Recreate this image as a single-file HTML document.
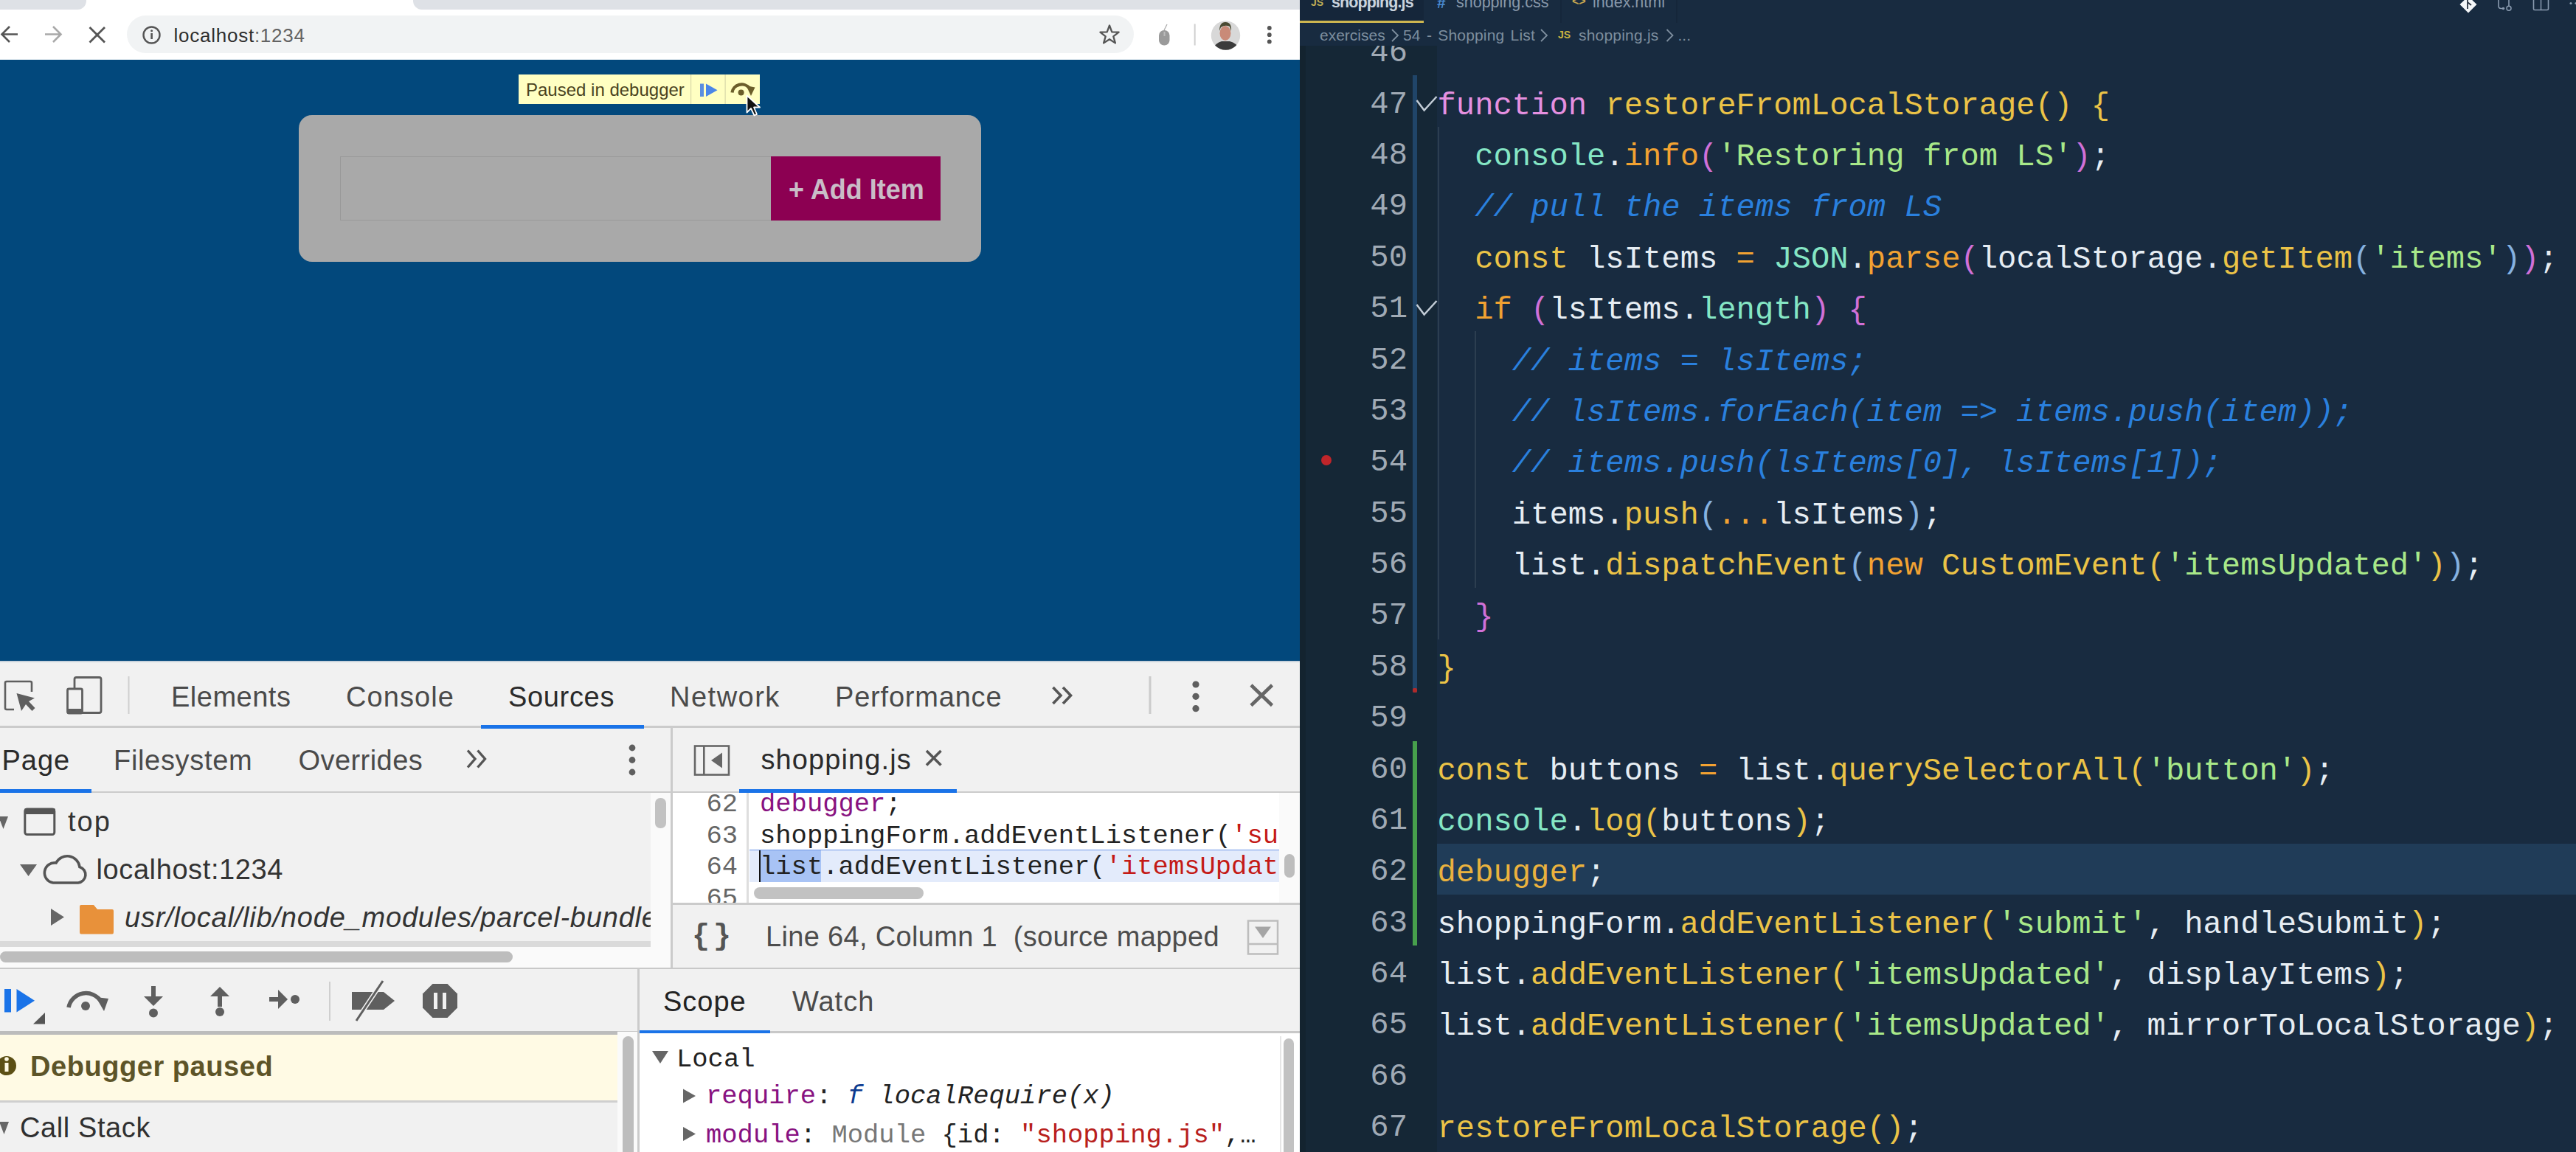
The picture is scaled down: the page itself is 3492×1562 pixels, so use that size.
<!DOCTYPE html>
<html><head><meta charset="utf-8">
<style>
*{margin:0;padding:0;box-sizing:border-box}
html,body{width:3492px;height:1562px;overflow:hidden;background:#182b40;font-family:"Liberation Sans",sans-serif}
.a{position:absolute}
.t{position:absolute;white-space:pre;line-height:1}
svg{position:absolute;overflow:visible}
/* vscode */
.vl{position:absolute;left:1948.5px;white-space:pre;font-family:"Liberation Mono",monospace;font-size:42.2px;line-height:69.32px;height:69.32px;color:#e6edf3}
.ln{position:absolute;left:1762px;width:146px;text-align:right;white-space:pre;font-family:"Liberation Mono",monospace;font-size:42.2px;line-height:69.32px;height:69.32px;color:#a0aab5}
.k{color:#e590e0}.f{color:#ebc347}.o{color:#f2a232}.m{color:#85e6c5}.s{color:#a8e889}.c{color:#2a80de;font-style:italic}
.d{color:#eab23e}.pp{color:#d070d8}.pb{color:#86b2e0}.pg{color:#ebc347}.w{color:#e6edf3}
/* devtools */
.dt{position:absolute;white-space:pre;line-height:1;color:#4a4a4a;font-size:38px}
.dm{position:absolute;white-space:pre;font-family:"Liberation Mono",monospace;font-size:35.5px;line-height:42.4px;color:#222}
</style></head>
<body>
<!-- ============ BROWSER ============ -->
<div class="a" style="left:0;top:0;width:1762px;height:81px;background:#fff"></div>
<div class="a" style="left:0;top:0;width:117px;height:13px;background:#dee1e6;border-bottom-right-radius:12px"></div>
<div class="a" style="left:560px;top:0;width:1202px;height:13px;background:#dee1e6;border-bottom-left-radius:12px"></div>
<div class="a" style="left:172px;top:21px;width:1365px;height:51px;background:#f1f3f4;border-radius:25.5px"></div>
<div class="t" style="left:235.5px;top:34.5px;font-size:26px;letter-spacing:0.75px;color:#2e2e2e">localhost<span style="color:#636363">:1234</span></div>
<svg style="left:0;top:0" width="1762" height="81">
<path d="M24 46.5 H3 M13 36 L2.5 46.5 L13 57" stroke="#555" stroke-width="2.6" fill="none"/>
<path d="M61 46.5 H82 M72 36 L82.5 46.5 L72 57" stroke="#a9a9a9" stroke-width="2.6" fill="none"/>
<path d="M121.5 37 L142 57.5 M142 37 L121.5 57.5" stroke="#555" stroke-width="2.8" fill="none"/>
<circle cx="205.5" cy="47.5" r="11" stroke="#555" stroke-width="2.4" fill="none"/>
<rect x="204.3" y="45" width="2.6" height="8" fill="#555"/><circle cx="205.6" cy="41.8" r="1.5" fill="#555"/>
<path d="M1504 34.5 L1507.3 43.3 L1516.6 43.6 L1509.3 49.4 L1511.9 58.4 L1504 53.2 L1496.1 58.4 L1498.7 49.4 L1491.4 43.6 L1500.7 43.3 Z" stroke="#555" stroke-width="2.3" fill="none" stroke-linejoin="round"/>
<path d="M1578 41 L1582 33" stroke="#aaa" stroke-width="1.2"/>
<rect x="1571" y="41" width="14.5" height="20.5" rx="7" fill="#9a9a9a"/>
<rect x="1577.5" y="43" width="2" height="6" fill="#bbb"/>
<rect x="1618.7" y="32.5" width="2" height="29" fill="#d0d0d0"/>
<clipPath id="av"><circle cx="1661.5" cy="48" r="19.7"/></clipPath>
<g clip-path="url(#av)">
<rect x="1640" y="26" width="44" height="44" fill="#d8d8d8"/>
<path d="M1642 68 Q1648 58 1656 56 L1667 56 Q1676 58 1682 68 Z" fill="#3b3b3b"/>
<ellipse cx="1661" cy="45" rx="7.5" ry="10" fill="#c98a78"/>
<path d="M1653 42 Q1653 30 1661 30 Q1670 30 1669 42 L1667 36 Q1661 33 1655 37 Z" fill="#4a4a32"/>
</g>
<circle cx="1720.8" cy="38" r="2.9" fill="#555"/><circle cx="1720.8" cy="47.2" r="2.9" fill="#555"/><circle cx="1720.8" cy="56.4" r="2.9" fill="#555"/>
</svg>

<!-- page -->
<div class="a" style="left:0;top:81px;width:1762px;height:815px;background:#02487c"></div>
<div class="a" style="left:405px;top:156px;width:925px;height:199px;background:#a9a9a9;border-radius:18px"></div>
<div class="a" style="left:461px;top:212px;width:584px;height:87px;border:1.5px solid #999;border-right:none"></div>
<div class="a" style="left:1045px;top:212px;width:230px;height:87px;background:#8c0052"></div>
<div class="t" style="left:1069px;top:237.6px;font-size:36px;font-weight:bold;color:#c9bdc7;transform:scaleY(1.08);transform-origin:0 0">+ Add Item</div>
<div class="a" style="left:703px;top:101px;width:327px;height:40px;background:#ffffc2"></div>
<div class="t" style="left:713px;top:110px;font-size:24px;color:#4a4320">Paused in debugger</div>
<svg style="left:0;top:0" width="1762" height="300">
<rect x="936" y="101" width="1.2" height="40" fill="#d8d8a8"/>
<rect x="982.5" y="101" width="1.2" height="40" fill="#d8d8a8"/>
<rect x="949" y="113.5" width="5" height="17.5" fill="#5a8ee0"/>
<path d="M957 113.5 L972.5 122.2 L957 131 Z" fill="#4a86e8"/>
<path d="M992.5 125.5 A13 12 0 0 1 1016 119.5" stroke="#6b5e2a" stroke-width="4.3" fill="none"/>
<path d="M1011.5 116 L1023.5 118.5 L1018 130 Z" fill="#6b5e2a"/>
<circle cx="1004.6" cy="125.5" r="4" fill="#6b5e2a"/>
<path d="M1012.5 129.5 L1012.5 152.5 L1018 147 L1022.5 156.5 L1026 155 L1022 145.5 L1030 145.5 Z" fill="#111" stroke="#fff" stroke-width="1.8" stroke-linejoin="round"/>
</svg>

<!-- devtools -->
<div class="a" style="left:0;top:896px;width:1762px;height:666px;background:#f1f1f1"></div>
<div class="a" style="left:0;top:896px;width:1762px;height:2px;background:#c9d3dc"></div>
<div class="a" style="left:0;top:983.5px;width:1762px;height:3px;background:#cbcbcb"></div>
<div class="a" style="left:652px;top:983px;width:221px;height:5px;background:#1a73e8"></div>
<div class="dt" style="left:232px;top:925.5px;letter-spacing:0.5px">Elements</div>
<div class="dt" style="left:469px;top:925.5px;letter-spacing:1.08px">Console</div>
<div class="dt" style="left:689px;top:925.5px;letter-spacing:0.67px;color:#2b2b2b">Sources</div>
<div class="dt" style="left:908px;top:925.5px;letter-spacing:1.5px">Network</div>
<div class="dt" style="left:1132px;top:925.5px;letter-spacing:0.8px">Performance</div>
<svg style="left:0;top:0" width="1762" height="1562">
<!-- inspect -->
<path d="M43 938 V926 Q43 924 41 924 H9 Q7 924 7 926 V960 Q7 962 9 962 H19" stroke="#5f5f5f" stroke-width="2.6" fill="none"/>
<path d="M22.5 940 L47 946.5 L39 951 L47.5 960 L43.5 964 L35 955 L29 964 Z" fill="#5f5f5f"/>
<!-- device -->
<rect x="101" y="918.5" width="36" height="48" rx="2.5" stroke="#5f5f5f" stroke-width="2.8" fill="none"/>
<rect x="91.5" y="934" width="20" height="33" rx="2" stroke="#5f5f5f" stroke-width="2.8" fill="#f1f1f1"/>
<rect x="91" y="961" width="21" height="6.5" fill="#5f5f5f"/>
<rect x="173.5" y="917" width="2" height="51" fill="#cfcfcf"/>
<!-- >> -->
<path d="M1427.5 932 L1438 943 L1427.5 954 M1441 932 L1451.5 943 L1441 954" stroke="#555" stroke-width="3.6" fill="none"/>
<rect x="1557.5" y="917" width="3" height="51" fill="#cbcbcb"/>
<circle cx="1621" cy="928" r="4.6" fill="#5f5f5f"/><circle cx="1621" cy="944.3" r="4.6" fill="#5f5f5f"/><circle cx="1621" cy="960.7" r="4.6" fill="#5f5f5f"/>
<path d="M1696 929 L1724.5 956.5 M1724.5 929 L1696 956.5" stroke="#666" stroke-width="4.6" fill="none"/>
</svg>

<!-- sub row -->
<div class="a" style="left:908.5px;top:987px;width:3.5px;height:325px;background:#cbcbcb"></div>
<div class="a" style="left:0;top:1072.5px;width:1762px;height:2.5px;background:#cbcbcb"></div>
<div class="a" style="left:0;top:1070px;width:124px;height:5px;background:#1a73e8"></div>
<div class="dt" style="left:2.5px;top:1012px;letter-spacing:1px;color:#2b2b2b">Page</div>
<div class="dt" style="left:154px;top:1012px;letter-spacing:0.67px">Filesystem</div>
<div class="dt" style="left:404.5px;top:1012px;letter-spacing:0.44px">Overrides</div>
<div class="dt" style="left:1031.5px;top:1011px;letter-spacing:1.1px;color:#2b2b2b">shopping.js</div>
<div class="a" style="left:1002px;top:1070px;width:295px;height:5px;background:#1a73e8"></div>
<svg style="left:0;top:0" width="1762" height="1562">
<path d="M634 1017.5 L644 1029 L634 1040.5 M647.5 1017.5 L657.5 1029 L647.5 1040.5" stroke="#555" stroke-width="3.4" fill="none"/>
<circle cx="857" cy="1014" r="4.4" fill="#5f5f5f"/><circle cx="857" cy="1030.5" r="4.4" fill="#5f5f5f"/><circle cx="857" cy="1047" r="4.4" fill="#5f5f5f"/>
<rect x="942" y="1011.5" width="46" height="39" stroke="#666" stroke-width="2.6" fill="none"/>
<rect x="953" y="1011.5" width="2.6" height="39" fill="#666"/>
<path d="M964 1031 L979 1020.5 V1041.5 Z" fill="#666"/>
<path d="M1256 1018 L1275.5 1037.5 M1275.5 1018 L1256 1037.5" stroke="#555" stroke-width="3.6" fill="none"/>
</svg>

<!-- navigator -->
<svg style="left:0;top:0" width="1762" height="1562">
<path d="M-2 1107 H11 L4.5 1124 Z" fill="#666"/>
<rect x="33.8" y="1097" width="40" height="34.5" rx="3" stroke="#555" stroke-width="3" fill="none"/>
<rect x="33" y="1096" width="42" height="8" rx="2" fill="#555"/>
<path d="M27 1172 H50 L38.5 1188 Z" fill="#666"/>
<path d="M72 1197 H106 A11 11 0 0 0 108 1175.5 A17 17 0 0 0 76 1170 A13 13 0 0 0 72 1197 Z" stroke="#555" stroke-width="3.6" fill="none"/>
<path d="M69 1232 L87 1243.5 L69 1255 Z" fill="#666"/>
<path d="M108 1229 Q108 1227 110 1227 H127 L132 1233 H152 Q154 1233 154 1235 V1264 Q154 1266.5 152 1266.5 H110 Q108 1266.5 108 1264 Z" fill="#e8913a"/>
</svg>
<div class="dt" style="left:92px;top:1095px;letter-spacing:2px;color:#333">top</div>
<div class="dt" style="left:130.5px;top:1160px;letter-spacing:0.6px;color:#333">localhost:1234</div>
<div class="dt" style="left:169px;top:1224.5px;color:#333;font-style:italic;letter-spacing:0.8px;width:713px;overflow:hidden">usr/local/lib/node_modules/parcel-bundler/</div>
<div class="a" style="left:882px;top:1075px;width:27px;height:237px;background:#fafafa"></div>
<div class="a" style="left:888px;top:1081.5px;width:14.5px;height:41.5px;border-radius:7px;background:#c2c2c2"></div>
<div class="a" style="left:0;top:1275.5px;width:882px;height:8px;background:#dadada"></div>
<div class="a" style="left:0;top:1283.5px;width:882px;height:28px;background:#fafafa"></div>
<div class="a" style="left:0;top:1290px;width:695px;height:15px;border-radius:7.5px;background:#bdbdbd"></div>

<!-- code pane -->
<div class="a" style="left:911.5px;top:1075px;width:850.5px;height:149px;background:#fff;overflow:hidden">
<div class="a" style="left:100.5px;top:0;width:3px;height:149px;background:#dedede"></div>
<div class="a" style="left:104px;top:77px;width:718.5px;height:43.7px;background:#e3ebfb;border-top:1.2px solid #6d95e6"></div>
<div class="a" style="left:118.5px;top:78.2px;width:83px;height:42.5px;background:#a8c3f5"></div>
<div class="a" style="left:117.5px;top:78px;width:1.8px;height:42.7px;background:#111"></div>
<div class="dm" style="left:0;top:-4.7px;width:88.5px;text-align:right;color:#666">62
63
64
65</div>
<div class="dm" style="left:118.5px;top:-4.7px"><span style="color:#881280">debugger</span>;
shoppingForm.addEventListener(<span style="color:#c41a16">'submit'</span>, handleSubmit);
list.addEventListener(<span style="color:#c41a16">'itemsUpdated'</span>, displayItems);
list.addEventListener(<span style="color:#c41a16">'itemsUpdated'</span>, mirrorToLocalStorage);</div>
<div class="a" style="left:822.5px;top:0;width:28px;height:149px;background:#fafafa"></div>
<div class="a" style="left:104px;top:123px;width:718.5px;height:26px;background:#fff"></div>
<div class="a" style="left:110px;top:127.6px;width:230.5px;height:16px;border-radius:8px;background:#c2c2c2"></div>
<div class="a" style="left:829.5px;top:83px;width:14px;height:32px;border-radius:7px;background:#bdbdbd"></div>
</div>
<!--DEVCODE-->
<!-- status -->
<div class="a" style="left:911.5px;top:1223.5px;width:850.5px;height:3px;background:#cbcbcb"></div>
<div class="a" style="left:0;top:1311.5px;width:1762px;height:2px;background:#c8c8c8"></div>
<div class="dt" style="left:938px;top:1251px;color:#555;font-family:'Liberation Mono',monospace;font-size:40px;font-weight:bold;letter-spacing:5px">{}</div>
<div class="dt" style="left:1038px;top:1251px;letter-spacing:0.33px;color:#4d4d4d">Line 64, Column 1  (source mapped</div>
<svg style="left:0;top:0" width="1762" height="1562">
<rect x="1692" y="1248.5" width="40" height="45" stroke="#bdbdbd" stroke-width="2.5" fill="none"/>
<path d="M1692 1280 H1732" stroke="#bdbdbd" stroke-width="2.5"/>
<path d="M1701 1256.5 H1723 L1712 1272 Z" fill="#a5a5a5"/>
</svg>

<!-- debugger toolbar -->
<div class="a" style="left:864px;top:1313px;width:2.5px;height:249px;background:#cbcbcb"></div>
<div class="a" style="left:0;top:1398px;width:1762px;height:3px;background:#c8c8c8"></div>
<svg style="left:0;top:0" width="1762" height="1562">
<rect x="6" y="1341" width="9" height="31.5" fill="#1a73e8"/>
<path d="M22.5 1341 L47 1356.8 L22.5 1372.5 Z" fill="#1a73e8"/>
<path d="M45 1388.5 L61 1373 V1388.5 Z" fill="#555"/>
<path d="M93 1366 A24 24 0 0 1 137 1358" stroke="#5f5f5f" stroke-width="5.5" fill="none"/>
<path d="M130 1352 L147 1354 L141 1371 Z" fill="#5f5f5f"/>
<circle cx="116" cy="1364" r="6" fill="#5f5f5f"/>
<path d="M208 1337 V1358" stroke="#5f5f5f" stroke-width="6" fill="none"/><path d="M195 1351 H221 L208 1364 Z" fill="#5f5f5f"/>
<circle cx="208" cy="1373.5" r="6" fill="#5f5f5f"/>
<path d="M298 1348 V1365" stroke="#5f5f5f" stroke-width="6" fill="none"/><path d="M285 1351 H311 L298 1338 Z" fill="#5f5f5f"/>
<circle cx="298" cy="1372" r="6" fill="#5f5f5f"/>
<path d="M365 1355 H382" stroke="#5f5f5f" stroke-width="6" fill="none"/><path d="M377 1342 L390 1355 L377 1368 Z" fill="#5f5f5f"/>
<circle cx="400" cy="1355" r="6" fill="#5f5f5f"/>
<rect x="446" y="1331" width="2" height="53" fill="#cfcfcf"/>
<path d="M477 1345 H520 L535 1357 L520 1369 H477 Z" fill="#5f5f5f"/>
<path d="M519 1330 L483 1384" stroke="#f1f1f1" stroke-width="6" fill="none"/>
<path d="M519 1330 L483 1384" stroke="#5f5f5f" stroke-width="3" fill="none"/>
<path d="M586.5 1334 H606.5 L620 1347.5 V1366.5 L606.5 1380 H586.5 L573 1366.5 V1347.5 Z" fill="#5f5f5f"/>
<rect x="588" y="1346" width="5" height="22" fill="#f1f1f1"/><rect x="600" y="1346" width="5" height="22" fill="#f1f1f1"/>
</svg>

<!-- paused banner -->
<div class="a" style="left:0;top:1401px;width:836.5px;height:92px;background:#fffae4"></div>
<div class="a" style="left:0;top:1492px;width:836.5px;height:3px;background:#cfcfcf"></div>
<div class="a" style="left:0;top:1398px;width:836.5px;height:4.5px;background:#bcbcbc"></div>
<div class="a" style="left:836.5px;top:1399px;width:27.5px;height:163px;background:#fafafa"></div>
<svg style="left:0;top:0" width="1762" height="1562">
<circle cx="9" cy="1445" r="13" fill="#5c4f14"/>
<rect x="6.5" y="1441" width="5" height="12" fill="#fffae4"/><circle cx="9" cy="1436" r="2.8" fill="#fffae4"/>
</svg>
<div class="dt" style="left:41px;top:1426.5px;letter-spacing:0.55px;font-weight:bold;color:#5d5428">Debugger paused</div>
<svg style="left:0;top:0" width="1762" height="1562"><path d="M-1 1521 H12 L5.5 1538 Z" fill="#666"/></svg>
<div class="dt" style="left:27px;top:1509.7px;letter-spacing:0.6px;color:#303030">Call Stack</div>
<div class="a" style="left:843.6px;top:1405px;width:15px;height:165px;border-radius:7.5px;background:#bdbdbd"></div>

<!-- scope -->
<div class="dt" style="left:899px;top:1339px;letter-spacing:1px;color:#222">Scope</div>
<div class="dt" style="left:1074px;top:1339px;letter-spacing:1px;color:#4a4a4a">Watch</div>
<div class="a" style="left:867px;top:1397px;width:177px;height:5px;background:#1a73e8"></div>
<div class="a" style="left:866.5px;top:1401px;width:895.5px;height:161px;background:#fff"></div>
<svg style="left:0;top:0" width="1762" height="1562">
<path d="M884 1425 H906 L895 1442 Z" fill="#666"/>
<path d="M926 1476.5 L943 1486 L926 1495.5 Z" fill="#666"/>
<path d="M926 1528 L943 1537.5 L926 1547 Z" fill="#666"/>
</svg>
<div class="dm" style="left:917px;top:1415.5px;color:#222">Local</div>
<div class="dm" style="left:957px;top:1466px"><span style="color:#881280">require</span>: <span style="color:#0d3b90;font-style:italic">f</span> <span style="font-style:italic;color:#222">localRequire(x)</span></div>
<div class="dm" style="left:957px;top:1518.5px"><span style="color:#881280">module</span>: <span style="color:#777">Module</span> {id: <span style="color:#b8201c">"shopping.js"</span>,…</div>
<div class="a" style="left:1735px;top:1405px;width:2px;height:157px;background:#e6e6e6"></div>
<div class="a" style="left:1740px;top:1408px;width:14px;height:160px;border-radius:7px;background:#c2c2c2"></div>

<!-- ============ VSCODE ============ -->
<!-- vscode chrome -->
<div class="a" style="left:1762px;top:62px;width:186px;height:1500px;background:#152736"></div>
<div class="a" style="left:1762px;top:62px;width:8px;height:1500px;background:#13232f"></div>
<div class="a" style="left:1762px;top:0;width:168px;height:31px;background:#15263a"></div>
<div class="a" style="left:1762px;top:27.5px;width:168px;height:3.5px;background:#cdb650"></div>
<div class="a" style="left:2115px;top:0;width:2px;height:31px;background:#15263a"></div>
<div class="a" style="left:2272px;top:0;width:2px;height:31px;background:#15263a"></div>
<div class="t" style="left:1777px;top:-4px;font-size:14px;font-weight:bold;color:#bfae55">JS</div>
<div class="t" style="left:1805px;top:-7px;font-size:21.5px;font-weight:bold;letter-spacing:-0.9px;color:#c9d3dd">shopping.js</div>
<div class="t" style="left:1948px;top:-7px;font-size:21px;font-weight:bold;color:#4a8ad0">#</div>
<div class="t" style="left:1974px;top:-7px;font-size:21.5px;color:#8797a8">shopping.css</div>
<div class="t" style="left:2131px;top:-6px;font-size:16px;font-weight:bold;color:#c8a850">&lt;&gt;</div>
<div class="t" style="left:2159px;top:-7px;font-size:21.5px;color:#8797a8">index.html</div>
<div class="t" style="left:1789px;top:37px;font-size:21px;color:#7d8e9e">exercises</div>
<div class="t" style="left:1902px;top:37px;font-size:21px;word-spacing:2.3px;letter-spacing:0.15px;color:#7d8e9e">54 - Shopping List</div>
<div class="t" style="left:2112px;top:40px;font-size:14px;font-weight:bold;color:#c8b440">JS</div>
<div class="t" style="left:2140px;top:36.5px;font-size:21px;letter-spacing:0.2px;color:#7d8e9e">shopping.js</div>
<div class="t" style="left:2274.5px;top:36.5px;font-size:21px;color:#7d8e9e">...</div>
<svg style="left:0;top:0" width="3492" height="100">
<path d="M1887 40 L1895 48 L1887 56 M2089 40 L2097 48 L2089 56 M2259.5 40 L2267.5 48 L2259.5 56" stroke="#7d8e9e" stroke-width="1.8" fill="none"/>
</svg>
<svg style="left:0;top:0" width="3492" height="40">
<path d="M3346 -5 L3357.5 6 L3346 17.5 L3334.5 6 Z" fill="#f4f6f8"/>
<path d="M3345 -2 V12 M3345 3 L3350 7" stroke="#2a3440" stroke-width="1.8" fill="none"/>
<path d="M3387 -2 V8 Q3387 11.5 3390.5 11.5 H3393" stroke="#8a9bb0" stroke-width="1.6" fill="none"/>
<path d="M3401 -2 V8" stroke="#8a9bb0" stroke-width="1.6" fill="none"/>
<circle cx="3401" cy="11.3" r="3" stroke="#8a9bb0" stroke-width="1.5" fill="none"/>
<circle cx="3393.5" cy="11.5" r="1.8" fill="#8a9bb0"/>
<rect x="3434.5" y="-4" width="20" height="17.5" rx="1.5" stroke="#8a9bb0" stroke-width="1.6" fill="none"/>
<path d="M3444.5 -4 V13" stroke="#8a9bb0" stroke-width="1.5"/>
<circle cx="3485" cy="4.5" r="1.6" fill="#8a9bb0"/><circle cx="3492" cy="4.5" r="1.6" fill="#8a9bb0"/>
</svg>
<!-- gutter decorations -->
<div class="a" style="left:1915px;top:102px;width:5.5px;height:837px;background:#204569"></div>
<div class="a" style="left:1915px;top:933px;width:5.5px;height:6px;border-radius:2px;background:#b02a2a"></div>
<div class="a" style="left:1914.5px;top:1005px;width:6px;height:277px;background:#47a04c"></div>
<div class="a" style="left:1948px;top:1144px;width:1544px;height:69px;background:#203c58"></div>
<div class="a" style="left:1949px;top:172px;width:1.5px;height:695px;background:#2c3e50"></div>
<div class="a" style="left:1999px;top:449px;width:1.5px;height:348px;background:#2c3e50"></div>
<div class="a" style="left:1791px;top:617px;width:14px;height:14px;border-radius:50%;background:#c0252a"></div>
<svg style="left:0;top:0" width="3492" height="1562">
<path d="M1920.5 136 L1930.6 149.5 L1947.5 131" stroke="#c2ccd6" stroke-width="2.5" fill="none"/>
<path d="M1920.5 413 L1930.6 426.5 L1947.5 408" stroke="#c2ccd6" stroke-width="2.5" fill="none"/>
</svg>
<div class="a" style="left:0;top:0;width:3492px;height:1562px;clip-path:inset(62px 0 0 0)">
<!--CODE-->
<div class="ln" style="top:38.36px">46</div>
<div class="ln" style="top:107.74px">47</div>
<div class="vl" style="top:109.74px"><span class="k">function</span> <span class="f">restoreFromLocalStorage</span><span class="pg">()</span> <span class="pg">{</span></div>
<div class="ln" style="top:177.12px">48</div>
<div class="vl" style="top:179.12px">  <span class="m">console</span>.<span class="o">info</span><span class="pp">(</span><span class="s">'Restoring from LS'</span><span class="pp">)</span>;</div>
<div class="ln" style="top:246.49px">49</div>
<div class="vl" style="top:248.49px">  <span class="c">// pull the items from LS</span></div>
<div class="ln" style="top:315.87px">50</div>
<div class="vl" style="top:317.87px">  <span class="f">const</span> lsItems <span class="o">=</span> <span class="m">JSON</span>.<span class="o">parse</span><span class="pp">(</span>localStorage.<span class="f">getItem</span><span class="pb">(</span><span class="s">'items'</span><span class="pb">)</span><span class="pp">)</span>;</div>
<div class="ln" style="top:385.24px">51</div>
<div class="vl" style="top:387.24px">  <span class="o">if</span> <span class="pp">(</span>lsItems.<span class="m">length</span><span class="pp">)</span> <span class="pp">{</span></div>
<div class="ln" style="top:454.62px">52</div>
<div class="vl" style="top:456.62px">    <span class="c">// items = lsItems;</span></div>
<div class="ln" style="top:523.99px">53</div>
<div class="vl" style="top:525.99px">    <span class="c">// lsItems.forEach(item =&gt; items.push(item));</span></div>
<div class="ln" style="top:593.37px">54</div>
<div class="vl" style="top:595.37px">    <span class="c">// items.push(lsItems[0], lsItems[1]);</span></div>
<div class="ln" style="top:662.74px">55</div>
<div class="vl" style="top:664.74px">    items.<span class="f">push</span><span class="pb">(</span><span class="o">...</span>lsItems<span class="pb">)</span>;</div>
<div class="ln" style="top:732.12px">56</div>
<div class="vl" style="top:734.12px">    list.<span class="f">dispatchEvent</span><span class="pb">(</span><span class="o">new</span> <span class="f">CustomEvent</span><span class="pg">(</span><span class="s">'itemsUpdated'</span><span class="pg">)</span><span class="pb">)</span>;</div>
<div class="ln" style="top:801.49px">57</div>
<div class="vl" style="top:803.49px">  <span class="pp">}</span></div>
<div class="ln" style="top:870.87px">58</div>
<div class="vl" style="top:872.87px"><span class="pg">}</span></div>
<div class="ln" style="top:940.24px">59</div>
<div class="ln" style="top:1009.62px">60</div>
<div class="vl" style="top:1011.62px"><span class="f">const</span> buttons <span class="o">=</span> list.<span class="f">querySelectorAll</span><span class="pg">(</span><span class="s">'button'</span><span class="pg">)</span>;</div>
<div class="ln" style="top:1078.99px">61</div>
<div class="vl" style="top:1080.99px"><span class="m">console</span>.<span class="f">log</span><span class="pg">(</span>buttons<span class="pg">)</span>;</div>
<div class="ln" style="top:1148.37px">62</div>
<div class="vl" style="top:1150.37px"><span class="d">debugger</span>;</div>
<div class="ln" style="top:1217.74px">63</div>
<div class="vl" style="top:1219.74px">shoppingForm.<span class="f">addEventListener</span><span class="pg">(</span><span class="s">'submit'</span>, handleSubmit<span class="pg">)</span>;</div>
<div class="ln" style="top:1287.12px">64</div>
<div class="vl" style="top:1289.12px">list.<span class="f">addEventListener</span><span class="pg">(</span><span class="s">'itemsUpdated'</span>, displayItems<span class="pg">)</span>;</div>
<div class="ln" style="top:1356.49px">65</div>
<div class="vl" style="top:1358.49px">list.<span class="f">addEventListener</span><span class="pg">(</span><span class="s">'itemsUpdated'</span>, mirrorToLocalStorage<span class="pg">)</span>;</div>
<div class="ln" style="top:1425.87px">66</div>
<div class="ln" style="top:1495.24px">67</div>
<div class="vl" style="top:1497.24px"><span class="f">restoreFromLocalStorage</span><span class="pg">()</span>;</div>
<!--/CODE-->
</div>
</body></html>
